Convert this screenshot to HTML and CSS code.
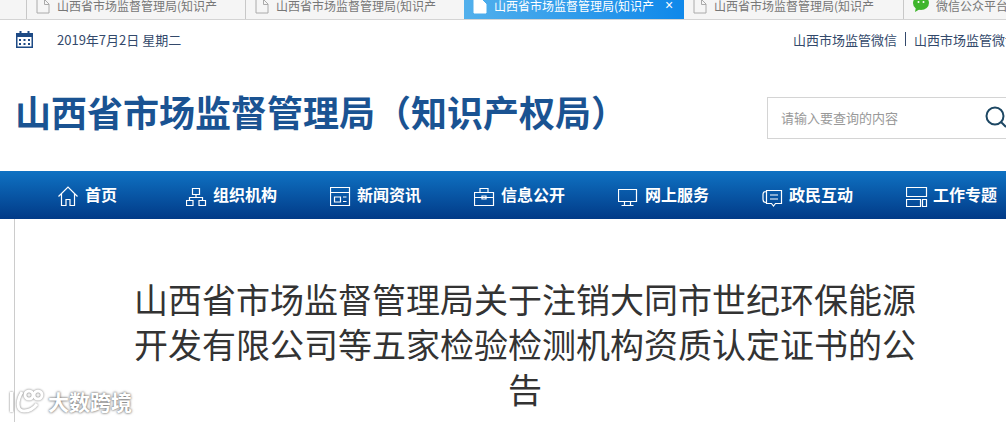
FILE: index.html
```html
<!DOCTYPE html>
<html lang="zh-CN">
<head>
  <meta charset="UTF-8" />
  <title>山西省市场监督管理局</title>
  <meta name="viewport" content="width=device-width, initial-scale=1.0">
  <link rel="stylesheet" href="styles.css">
</head>
<body>
  <div class="tabs">
    <div class="tab">
      <svg class="doc" viewBox="0 0 14 19"><path d="M1 0v13h12V4L9 0M8.500 0v4.500H13"/></svg>
      <span class="tab-text">山西省市场监督管理局(知识产</span>
    </div>
    <div class="tab">
      <svg class="doc" viewBox="0 0 14 19"><path d="M1 0v13h12V4L9 0M8.500 0v4.500H13"/></svg>
      <span class="tab-text">山西省市场监督管理局(知识产</span>
    </div>
    <div class="tab active">
      <svg class="doc" viewBox="0 0 14 19"><path d="M1 0v13h12V4L9 0z" fill="#fff"/></svg>
      <span class="tab-text">山西省市场监督管理局(知识产</span>
      <span class="tab-close">×</span>
    </div>
    <div class="tab">
      <svg class="doc" viewBox="0 0 14 19"><path d="M1 0v13h12V4L9 0M8.500 0v4.500H13"/></svg>
      <span class="tab-text">山西省市场监督管理局(知识产</span>
    </div>
    <div class="tab tab-last">
      <svg class="wx" viewBox="0 0 16 16"><ellipse cx="8" cy="6" rx="8" ry="7" fill="#3fb52c"/><path d="M3 10l-1 5 5-3z" fill="#3fb52c"/><circle cx="5.500" cy="5" r="1" fill="#fff"/><circle cx="10.500" cy="5" r="1" fill="#fff"/></svg>
      <span class="tab-text">微信公众平台</span>
    </div>
  </div>

  <div class="topbar">
    <div class="date">
      <svg class="cal" viewBox="0 0 17 17"><path d="M0 2h17v15H0z" fill="#1d4a85"/><path d="M1.500 6h14v9.500h-14z" fill="#fff"/><path d="M3.500 0h2v3h-2zM11.500 0h2v3h-2zM3 8h2v2H3zM7.500 8h2v2h-2zM12 8h2v2h-2zM3 12h2v2H3zM7.500 12h2v2h-2zM12 12h2v2h-2z" fill="#1d4a85"/></svg>
      <span>2019年7月2日 星期二</span>
    </div>
    <div class="links">
      <a>山西市场监管微信</a><i></i><a>山西市场监管微博</a>
    </div>
  </div>

  <div class="header">
    <h1 class="site-name">山西省市场监督管理局（知识产权局）</h1>
    <div class="search">
      <span class="search-text">请输入要查询的内容</span>
      <svg class="search-icon" viewBox="0 0 24 24"><circle cx="11" cy="10" r="8.500"/><path d="M17 16l5 5"/></svg>
    </div>
  </div>

  <div class="nav">
    <a class="nav-item nav-home">
      <svg viewBox="0 0 22 22"><path d="M.5 10.500L10 1l9.500 9.500M3.500 8v11.500H8v-6h4v6h4.500V8"/></svg>首页
    </a>
    <a class="nav-item">
      <svg viewBox="0 0 22 22"><path d="M6.500 2.500h7v6h-7zM10 8.500v3M3.500 14.500v-3h13v3M.5 14.500H7v5H.5zM13 14.500h6.500v5H13z"/></svg>组织机构
    </a>
    <a class="nav-item">
      <svg viewBox="0 0 22 22"><path d="M.5 1.500h19v18H.5zM.5 6.500h19M4.500 11h6v5h-6zM13 11h3.500M13 15.500h3.500"/></svg>新闻资讯
    </a>
    <a class="nav-item">
      <svg viewBox="0 0 22 22"><path d="M.5 6.500h19v13H.5zM6 6.500v-4h8v4M.5 11.500h19M8 10h4v3H8z"/></svg>信息公开
    </a>
    <a class="nav-item">
      <svg viewBox="0 0 22 22"><path d="M.5 3.500h18v12H.5zM6.500 15.500v4M12.500 15.500v4M3.500 19.500h12"/></svg>网上服务
    </a>
    <a class="nav-item">
      <svg viewBox="0 0 22 22"><path d="M4.500 4.500h15v13h-6l-2 2.500-2-2.500h-5zM4 5.500q-3 0-3 3v5q0 3 3 3M8 9h8M8 13h8"/></svg>政民互动
    </a>
    <a class="nav-item">
      <svg viewBox="0 0 22 22"><path d="M.5 1.500h20v9H.5zM.5 13.500h14v7H.5zM16.500 13.500h4v7h-4z"/></svg>工作专题
    </a>
  </div>

  <div class="main">
    <h2 class="article-title">山西省市场监督管理局关于注销大同市世纪环保能源开发有限公司等五家检验检测机构资质认定证书的公告</h2>
  </div>

  <div class="watermark">
    <svg viewBox="0 0 38 26"><path d="M3.500 4v20M14 4C9 12 8 23 16 23c6 0 10-3 13-7"/><circle cx="21" cy="7" r="4"/><circle cx="30" cy="7" r="4"/></svg>
    <span>大数跨境</span>
  </div>
</body>
</html>
```

FILE: styles.css
```css
body {
  margin: 0;
  height: 422px;
  overflow: hidden;
  background: #fff;
  font-family: "Noto Sans CJK SC", "Liberation Sans", sans-serif;
  color: #333;
  position: relative;
}

/* browser tab strip, cut off at the top */
.tabs {
  display: flex;
  height: 19px;
  padding-left: 26px;
  background: #f5f5f5;
  border-bottom: 1px solid #d4d4d4;
  overflow: hidden;
}
.tab {
  width: 219px;
  flex: none;
  height: 19px;
  box-sizing: border-box;
  display: flex;
  align-items: flex-start;
  padding-left: 9px;
  border-left: 1px solid #c8c8c8;
  color: #777;
  overflow: hidden;
}
.tab.active {
  width: 220px;
  height: 20px;
  border-left: none;
  padding-left: 9px;
  background: linear-gradient(90deg, #52b0ec, #0f88ea);
  color: #fff;
}
.tab.active + .tab {
  border-left: none;
}
.tab-last {
  width: 110px;
}
.tab-text {
  width: 163px;
  margin-left: 7px;
  margin-top: -3px;
  font-size: 12px;
  line-height: 17px;
  white-space: nowrap;
  overflow: hidden;
  flex: none;
}
.tab-close {
  margin-top: -3px;
  margin-left: 8px;
  font-family: "Liberation Sans", sans-serif;
  font-size: 14px;
  line-height: 17px;
}
.doc {
  width: 14px;
  height: 19px;
  flex: none;
  fill: none;
  stroke: #aaa;
}
.active .doc {
  stroke: #fff;
}
.wx {
  width: 16px;
  height: 16px;
  flex: none;
  margin-top: -3px;
}

.topbar {
  display: flex;
  justify-content: space-between;
  align-items: center;
  height: 40px;
  box-sizing: border-box;
  padding: 0 0 2px 16px;
  font-size: 13px;
  color: #33496b;
}
.date {
  display: flex;
  align-items: center;
}
.cal {
  width: 17px;
  height: 17px;
  margin-right: 24px;
}
.links {
  display: flex;
  align-items: center;
  white-space: nowrap;
  width: 213px;
  flex: none;
  overflow: hidden;
}
.links i {
  width: 1px;
  height: 14px;
  background: #33496b;
  margin: 0 8px;
  flex: none;
}

.header {
  display: flex;
  justify-content: space-between;
  align-items: center;
  height: 111px;
  padding-left: 15px;
}
.site-name {
  margin: 0 0 10px;
  font-size: 36px;
  font-weight: 700;
  line-height: 44px;
  color: #1a5392;
  white-space: nowrap;
}
.search {
  width: 239px;
  height: 42px;
  box-sizing: border-box;
  display: flex;
  align-items: center;
  justify-content: space-between;
  padding: 0 0 0 13px;
  border: 1px solid #d4d4d4;
  border-right: none;
  margin-top: 4px;
  flex: none;
}
.search-text {
  font-size: 13px;
  color: #999;
}
.search-icon {
  width: 24px;
  height: 24px;
  fill: none;
  stroke: #1d4763;
  stroke-width: 2;
  margin-right: -2px;
}

.nav {
  display: flex;
  height: 48px;
  padding-left: 58px;
  background: linear-gradient(180deg, #0f72c3, #013a87);
  overflow: hidden;
}
.nav-item {
  width: 144px;
  flex: none;
  box-sizing: border-box;
  padding-bottom: 3px;
  display: flex;
  align-items: center;
  font-size: 16px;
  font-weight: 700;
  color: #fff;
  white-space: nowrap;
}
.nav-home {
  width: 128px;
}
.nav-item svg {
  width: 22px;
  height: 22px;
  margin: 7px 5px 0 0;
  fill: none;
  stroke: #fff;
  stroke-width: 1.200;
  flex: none;
}

.main {
  margin-left: 14px;
  height: 203px;
  box-sizing: border-box;
  border-left: 1px solid #ccc;
  padding: 57px 89px 0 118px;
}
.article-title {
  margin: 0;
  font-size: 34px;
  font-weight: 400;
  line-height: 45px;
  text-align: center;
  color: #333;
}

.watermark {
  position: absolute;
  left: 8px;
  bottom: 6px;
  display: flex;
  align-items: center;
  color: #fff;
  font-size: 21px;
  font-weight: 700;
  text-shadow: 0 0 3px #777, 0 0 2px #888;
}
.watermark svg {
  width: 38px;
  height: 26px;
  fill: none;
  stroke: #fff;
  stroke-width: 3;
  filter: drop-shadow(0 0 1px #777);
  margin-right: 2px;
}
```
